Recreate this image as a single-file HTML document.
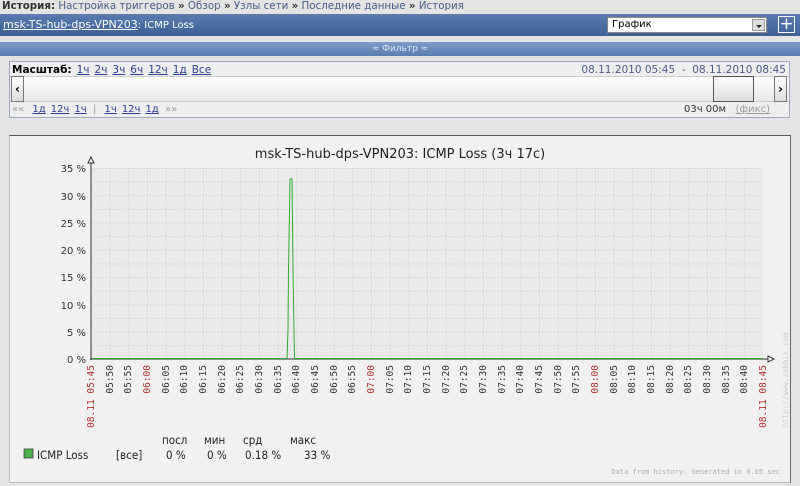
<!DOCTYPE html>
<html><head><meta charset="utf-8"><style>
*{margin:0;padding:0;box-sizing:border-box}
body{width:800px;height:486px;background:#e4e4e4;font-family:"DejaVu Sans","Liberation Sans",sans-serif;font-size:10px;overflow:hidden;position:relative}
.hist{position:absolute;left:0;top:0;height:14px;width:800px;padding:0px 2px;color:#4b5b86;font-size:10.3px;white-space:nowrap}
.hist b{color:#333}
.hdr{position:absolute;left:0;top:14px;width:800px;height:22px;background:linear-gradient(#5a7cb0,#3e5f93);color:#fff;font-size:10px;padding:4px 3px}
.hdr u{font-size:11px}
.sel{position:absolute;left:607px;top:17px;width:160px;height:16px;background:#fff;border:1px solid #888;color:#000;font-size:10px;padding:1px 4px}
.sel i{position:absolute;right:1px;top:1px;width:13px;height:12px;background:#ddd;border:1px solid #999}
.sel i:after{content:"";position:absolute;left:3px;top:5px;border:3px solid transparent;border-top:3px solid #222}
.plus{position:absolute;left:778px;top:16px;width:17px;height:17px;border:1px solid #fff;color:#fff;font-size:17px;line-height:14px;text-align:center}
.flt{position:absolute;left:0;top:42px;width:800px;height:14px;background:linear-gradient(#7d9bc8,#5a7cb0);color:#dde6f4;font-size:9px;text-align:center;line-height:14px}
.scr{position:absolute;left:9px;top:61px;width:781px;height:57px;border:1px solid #a0a8c0;background:#eee}
.scr .r1{position:absolute;left:2px;top:2px;font-size:10.5px;white-space:nowrap}
.scr a{color:#2e3e8e;text-decoration:underline;margin-left:5px}
.mid{position:absolute;left:0;top:14px;width:779px;height:26px;background:linear-gradient(#fff,#e8e8e8);border-top:1px solid #ccc;border-bottom:1px solid #ccc}
.btn{position:absolute;top:14px;width:13px;height:26px;background:linear-gradient(#fff,#ddd);border:1px solid #777;font-weight:bold;font-size:12px;text-align:center;line-height:24px}
.r3{position:absolute;left:2px;top:42px;font-size:10px;color:#999;white-space:nowrap}
.gfr{position:absolute;left:9px;top:135px;width:782px;height:348px;background:#f1f1f1;border:1px solid #555;border-color:#555 #666 #bbb #bbb}
</style></head><body>
<div class="hist"><b>История:</b> Настройка триггеров <b>»</b> Обзор <b>»</b> Узлы сети <b>»</b> Последние данные <b>»</b> История</div>
<div class="hdr"><u>msk-TS-hub-dps-VPN203</u>: ICMP Loss</div>
<div class="sel">График<i></i></div>
<div class="plus">+</div>
<div class="flt">≈ Фильтр ≈</div>
<div class="scr">
<div class="r1"><b>Масштаб:</b><a>1ч</a><a>2ч</a><a>3ч</a><a>6ч</a><a>12ч</a><a>1д</a><a>Все</a></div>
<div style="position:absolute;right:3px;top:2px;color:#4b5b86;font-size:10.5px;white-space:nowrap">08.11.2010 05:45 &nbsp;-&nbsp; 08.11.2010 08:45</div>
<div class="mid"></div>
<div class="btn" style="left:1px">‹</div>
<div class="btn" style="left:764px">›</div>
<div style="position:absolute;left:703px;top:14px;width:41px;height:26px;border:1px solid #555;background:linear-gradient(#fff,#ddd)"></div>
<div class="r3">«« <a>1д</a><a>12ч</a><a>1ч</a> &nbsp;| <a>1ч</a><a>12ч</a><a>1д</a> &nbsp;»»</div>
<div style="position:absolute;left:674px;top:42px;font-size:10px;color:#333;white-space:nowrap">03ч 00м &nbsp;&nbsp;<span style="color:#999;text-decoration:underline">(фикс)</span></div>
</div>
<div class="gfr"></div>
<svg style="position:absolute;left:0;top:0" width="800" height="486" font-family="DejaVu Sans,sans-serif">
<defs><pattern id="g" patternUnits="userSpaceOnUse" x="91" y="168" width="18.667" height="13.64">
<line x1="0.5" y1="0" x2="0.5" y2="13.64" stroke="#c8c8c8" stroke-dasharray="1,2"/>
<line x1="0" y1="0.5" x2="18.667" y2="0.5" stroke="#c8c8c8" stroke-dasharray="1,2"/></pattern></defs>
<text x="400" y="158" font-size="13" text-anchor="middle" fill="#222">msk-TS-hub-dps-VPN203: ICMP Loss  (3ч 17с)</text>
<rect x="91" y="168" width="672" height="191" fill="#eaeaea"/>
<rect x="91" y="168" width="672" height="191" fill="url(#g)"/>
<line x1="91" y1="160" x2="91" y2="360" stroke="#333"/>
<path d="M88,163 L91,157 L94,163Z" fill="#fff" stroke="#333"/>
<line x1="90" y1="359" x2="768" y2="359" stroke="#333"/>
<path d="M768,356 L774,359 L768,362Z" fill="#fff" stroke="#333"/>
<path d="M91,358.5 L287,358.5 L288,330 L288.5,270 L289,240 L290,179 L292,179 L293,270 L294,330 L294.5,358.5 L763,358.5" fill="none" stroke="#2fa82f"/>
<g font-size="10" fill="#333" text-anchor="end">
<text x="86" y="172">35 %</text><text x="86" y="200">30 %</text><text x="86" y="227">25 %</text><text x="86" y="254">20 %</text><text x="86" y="281">15 %</text><text x="86" y="309">10 %</text><text x="86" y="336">5 %</text><text x="86" y="363">0 %</text></g>
<g font-size="9.5" font-family="DejaVu Sans Mono,monospace" fill="#333" text-anchor="end">
<text transform="translate(94,365) rotate(-90)" fill="#b03030">08.11 05:45</text>
<text transform="translate(113,365) rotate(-90)">05:50</text>
<text transform="translate(131,365) rotate(-90)">05:55</text>
<text transform="translate(150,365) rotate(-90)" fill="#b03030">06:00</text>
<text transform="translate(169,365) rotate(-90)">06:05</text>
<text transform="translate(187,365) rotate(-90)">06:10</text>
<text transform="translate(206,365) rotate(-90)">06:15</text>
<text transform="translate(225,365) rotate(-90)">06:20</text>
<text transform="translate(243,365) rotate(-90)">06:25</text>
<text transform="translate(262,365) rotate(-90)">06:30</text>
<text transform="translate(281,365) rotate(-90)">06:35</text>
<text transform="translate(299,365) rotate(-90)">06:40</text>
<text transform="translate(318,365) rotate(-90)">06:45</text>
<text transform="translate(337,365) rotate(-90)">06:50</text>
<text transform="translate(355,365) rotate(-90)">06:55</text>
<text transform="translate(374,365) rotate(-90)" fill="#b03030">07:00</text>
<text transform="translate(393,365) rotate(-90)">07:05</text>
<text transform="translate(411,365) rotate(-90)">07:10</text>
<text transform="translate(430,365) rotate(-90)">07:15</text>
<text transform="translate(449,365) rotate(-90)">07:20</text>
<text transform="translate(467,365) rotate(-90)">07:25</text>
<text transform="translate(486,365) rotate(-90)">07:30</text>
<text transform="translate(505,365) rotate(-90)">07:35</text>
<text transform="translate(523,365) rotate(-90)">07:40</text>
<text transform="translate(542,365) rotate(-90)">07:45</text>
<text transform="translate(561,365) rotate(-90)">07:50</text>
<text transform="translate(579,365) rotate(-90)">07:55</text>
<text transform="translate(598,365) rotate(-90)" fill="#b03030">08:00</text>
<text transform="translate(617,365) rotate(-90)">08:05</text>
<text transform="translate(635,365) rotate(-90)">08:10</text>
<text transform="translate(654,365) rotate(-90)">08:15</text>
<text transform="translate(673,365) rotate(-90)">08:20</text>
<text transform="translate(691,365) rotate(-90)">08:25</text>
<text transform="translate(710,365) rotate(-90)">08:30</text>
<text transform="translate(729,365) rotate(-90)">08:35</text>
<text transform="translate(747,365) rotate(-90)">08:40</text>
<text transform="translate(766,365) rotate(-90)" fill="#b03030">08.11 08:45</text>
<text transform="translate(788,380) rotate(-90)" fill="#ccc" font-size="7.5" text-anchor="middle">http://www.zabbix.com</text>
</g>
<rect x="24" y="449" width="9" height="9" fill="#4cb04c" stroke="#333" stroke-width="0.7"/>
<g font-size="11.5" fill="#222" font-family="DejaVu Sans Condensed,DejaVu Sans,sans-serif"><text x="37" y="459">ICMP Loss</text><text x="116" y="459">[все]</text>
<text x="162" y="444">посл</text><text x="204" y="444">мин</text><text x="243" y="444">срд</text><text x="290" y="444">макс</text>
<text x="166" y="459">0 %</text><text x="207" y="459">0 %</text><text x="245" y="459">0.18 %</text><text x="304" y="459">33 %</text></g>
<text x="780" y="474" font-size="7" fill="#aaa" text-anchor="end" font-family="DejaVu Sans Mono,monospace">Data from history. Generated in 0.05 sec</text>
</svg>
</body></html>
